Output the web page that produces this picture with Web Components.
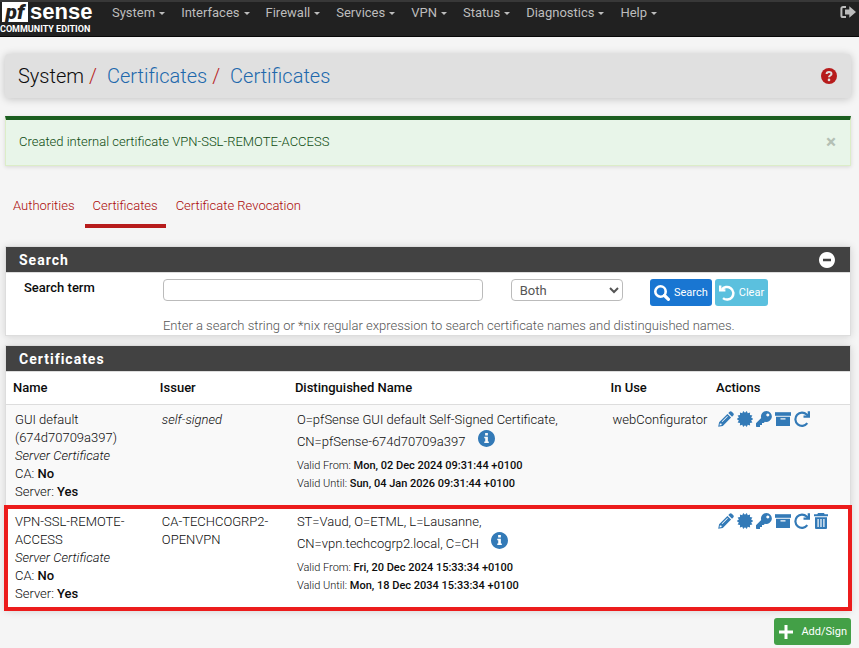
<!DOCTYPE html>
<html lang="en">
<head>
<meta charset="utf-8">
<title>pfSense - System: Certificates</title>
<style>
body { margin: 0; background: #f5f5f5; color: #0c0c0c; font: 300 13px/18px Roboto, "Liberation Sans", sans-serif; }
</style>
</head>
<body>
<pf-app></pf-app>
<script>
const define = (name, html) => customElements.define(name, class extends HTMLElement {
  connectedCallback() {
    if (this.shadowRoot) return;
    const t = document.createElement('template');
    t.innerHTML = typeof html === 'function' ? html(this) : html;
    this.attachShadow({ mode: 'open' }).append(t.content.cloneNode(true));
  }
});

const seal = () => {
  let p = [];
  for (let i = 0; i < 28; i++) {
    const r = i % 2 ? 6.3 : 8.2, a = i * Math.PI / 14;
    p.push((8 + r * Math.cos(a)).toFixed(2) + ' ' + (8 + r * Math.sin(a)).toFixed(2));
  }
  return `<path d="M${p.join('L')}Z"/>`;
};
const icons = {
  pencil: '<path fill-rule="evenodd" d="M11.600.700a1.600 1.600 0 0 1 2.200 0l1.500 1.500a1.600 1.600 0 0 1 0 2.200L14 5.700 10.300 2ZM9.400 2.900l3.700 3.700-8.300 8.300L.2 15.800l.9-4.600ZM9.300 4.900 3.700 10.500l.6.6 5.600-5.600ZM1.900 12.500l-.4 2 2-.4.2-1.400-1.300-.1Z"/>',
  seal: seal(),
  key: '<path fill-rule="evenodd" d="M10.500 0a5.500 5.500 0 1 1-1.600 10.800L7.700 12H6v2H4v2H.7a.7.7 0 0 1-.7-.7v-3l5.200-5.200A5.500 5.500 0 0 1 10.500 0ZM11.800 2.600a1.500 1.500 0 1 0 .01 0Z"/>',
  archive: '<path d="M0 1.200h16v3.600H0Z"/><path fill-rule="evenodd" d="M1 5.700h14v9.300H1ZM5.500 7.200v1.300h5V7.200Z"/>',
  renew: '<path d="M13.300 12.200A6.600 6.600 0 1 1 12.700 3.600L14 5" fill="none" stroke="currentColor" stroke-width="2.200"/><path d="M16 .2V6.700H9.500V4.500h4.200V.2Z"/>',
  trash: '<path d="M5 0h6l.7 1.300H15v2H1v-2h3.300Z"/><path fill-rule="evenodd" d="M2 4.300h12V15a1 1 0 0 1-1 1H3a1 1 0 0 1-1-1ZM4.500 6v8h1.200V6Zm2.900 0v8h1.200V6Zm2.900 0v8h1.200V6Z"/>',
  search: '<path d="M10.500 10.500 14.400 14.400" stroke="currentColor" stroke-width="3.200" stroke-linecap="round"/><circle cx="6.500" cy="6.500" r="5.200" fill="none" stroke="currentColor" stroke-width="2.600"/>',
  undo: '<path d="M2.800 4.800A6.300 6.300 0 1 1 4 13.100" fill="none" stroke="currentColor" stroke-width="2.500"/><path d="M0 .5h2.400v3.700h4v2.400H0Z"/>',
  plus: '<path d="M6.500 1h3v5.500H15v3H9.500V15h-3V9.500H1v-3h5.500Z"/>',
  minus: '<path fill-rule="evenodd" d="M8 0a8 8 0 1 1-.01 0ZM4 6.800v2.400h8V6.800Z"/>',
  info: '<path fill-rule="evenodd" d="M8 0a8 8 0 1 1-.01 0ZM6.700 2.900v2.200h2.600V2.900ZM5.900 6.400v1.300h.9v3.200h-.9v1.300h4.300v-1.300h-.9V6.400Z"/>',
  help: '<circle cx="8" cy="8" r="8"/><path d="M5.600 6.100C5.600 3.200 10.500 3.300 10.500 5.900 10.500 7.500 8 7.500 8 9.200" fill="none" stroke="#e0e0e0" stroke-width="2"/><circle cx="8" cy="11.900" r="1.300" fill="#e0e0e0"/>',
  logout: '<path d="M6 2.900H3A1.600 1.600 0 0 0 1.400 4.500v7A1.600 1.600 0 0 0 3 13.100h3" fill="none" stroke="currentColor" stroke-width="2"/><path d="M5 5.500h4.300V2.200L16 8l-6.700 5.800V10.500H5Z"/>'
};
define('pf-icon', el => `<style>:host{display:inline-block;width:16px;height:16px}svg{display:block;width:100%;height:100%;fill:currentColor}</style>
<svg viewBox="0 0 16 16" aria-hidden="true">${icons[el.getAttribute('name')]}</svg>`);

define('pf-logo', `<style>
:host{display:block;width:96px;color:#fff}
a{color:inherit;text-decoration:none;display:block}
.mark{display:flex;align-items:flex-start;gap:2px;height:21px}
.pf{width:26px;margin-left:2px;background:#fff;color:#212121;font:italic 900 21px/20px Roboto,sans-serif;text-align:center}
.word{font:700 22px/20px "Liberation Sans",sans-serif}
.ed{display:block;font-size:9px;font-weight:700;line-height:12px;white-space:nowrap;text-transform:uppercase}
</style><a href="#"><span class="mark"><span class="pf">pf</span><span class="word">sense</span></span><span class="ed">Community Edition</span></a>`);

define('nav-menu', `<style>
:host{display:block}
a{display:flex;align-items:center;gap:4px;padding:0 8px;color:#bdbdbd;text-decoration:none;font-weight:400}
a::after{content:"";border:3px solid transparent;border-top-color:currentColor;border-bottom:0}
</style><a href="#"><slot></slot></a>`);

define('pf-nav', `<style>
:host{display:flex;align-items:flex-start;background:#212121;border-top:2px solid #383838;border-bottom:1px solid #080808;min-height:34px}
nav{display:flex;flex:1;padding:2px 0 0 8px}
.out{color:#bdbdbd;padding:2px 3px 0 0}
</style><pf-logo></pf-logo>
<nav aria-label="Main">${['System','Interfaces','Firewall','Services','VPN','Status','Diagnostics','Help'].map(t=>`<nav-menu>${t}</nav-menu>`).join('')}</nav>
<a class="out" href="#" aria-label="Logout"><pf-icon name="logout"></pf-icon></a>`);

define('page-heading', `<style>
:host{display:flex;align-items:center;justify-content:space-between;background:#e0e0e0;border-radius:4px;padding:8px 14px 8px 13px;box-shadow:0 1px 8px rgba(0,0,0,.22)}
h1{margin:0;font-size:20px;line-height:28px;font-weight:inherit;display:flex}
h1 a{color:#2068ac;text-decoration:none}
i{font-style:normal;color:#b71c1c;padding:0 10px 0 5px}
.help{color:#b71c1c;line-height:0}
</style><h1><span>System</span><i>/</i><a href="#">Certificates</a><i>/</i><a href="#">Certificates</a></h1>
<a class="help" href="#" aria-label="Help"><pf-icon name="help"></pf-icon></a>`);

define('pf-alert', `<style>
:host{display:flex;align-items:flex-start;justify-content:space-between;background:#e8f5e9;color:#0c4a10;border:1px solid #dcedc8;border-top:4px solid #1b5e20;padding:13px;min-height:19px;box-shadow:0 1px 4px rgba(0,0,0,.12)}
button{border:0;padding:0 1px;background:none;color:#b4c0b5;font:700 19px/18px Roboto,sans-serif}
</style><span><slot></slot></span><button type="button" aria-label="Close">×</button>`);

define('pf-tabs', `<style>
:host{display:flex;gap:2px}
a{color:#ab0808;text-decoration:none;padding:9px 8px;border-bottom:4px solid transparent}
a.on{border-color:#b71c1c}
</style><a href="#">Authorities</a><a class="on" href="#" aria-current="page">Certificates</a><a href="#">Certificate Revocation</a>`);

define('pf-panel', `<style>
:host{display:block;background:#fff;border:1px solid #ddd;box-shadow:0 1px 8px rgba(0,0,0,.14)}
header{display:flex;align-items:center;justify-content:space-between;background:#424242;color:#fff;padding:0 15px 0 13px;height:25px;border-bottom:1px solid #ddd}
h2{margin:0;font-size:14px;font-weight:700;letter-spacing:1px}
</style><header><h2><slot name="title"></slot></h2><slot name="tool"></slot></header><slot></slot>`);

define('pf-button', el => `<style>
:host{display:inline-block}
button{display:flex;align-items:center;gap:4px;height:27px;padding:0 4px;border:0;border-radius:3px;color:#fff;background:${el.getAttribute('color')};font:11px/18px Roboto,sans-serif}
:host([wide]) button{gap:7px}
</style><button type="button"><pf-icon name="${el.getAttribute('icon')}"></pf-icon><span><slot></slot></span></button>`);

define('search-form', `<style>
:host{display:block}
form{display:grid;grid-template-columns:18.6% 41.2% 16.5% 1fr;padding-top:6px;align-items:start}
label{font-weight:500;padding-left:18px}
input,select{box-sizing:border-box;height:22px;border:1px solid #bbb;border-radius:4px;background:#fff;color:#555;font:13px Roboto,sans-serif;display:block}
input{width:92%}
select{width:81%;padding:0 0 0 4px}
.btns{display:flex;gap:3px}
p{margin:11px 0 0;grid-column:2/-1;color:#555}
</style><form><label for="q">Search term</label><input id="q" type="text"><select aria-label="Search in"><option>Both</option></select>
<div class="btns"><pf-button icon="search" color="#1976d2">Search</pf-button><pf-button icon="undo" color="#5bc0de">Clear</pf-button></div>
<p>Enter a search string or *nix regular expression to search certificate names and distinguished names.</p></form>`);

const certs = [
  { name: 'GUI default (674d70709a397)', issuer: '<i>self-signed</i>', dn: 'O=pfSense GUI default Self-Signed Certificate, CN=pfSense-674d70709a397', from: 'Mon, 02 Dec 2024 09:31:44 +0100', until: 'Sun, 04 Jan 2026 09:31:44 +0100', use: 'webConfigurator', acts: ['pencil','seal','key','archive','renew'] },
  { name: 'VPN-SSL-REMOTE-ACCESS', issuer: 'CA-TECHCOGRP2-OPENVPN', dn: 'ST=Vaud, O=ETML, L=Lausanne, CN=vpn.techcogrp2.local, C=CH', from: 'Fri, 20 Dec 2024 15:33:34 +0100', until: 'Mon, 18 Dec 2034 15:33:34 +0100', use: '', acts: ['pencil','seal','key','archive','renew','trash'], marked: true }
];
define('cert-table', `<style>
:host{display:block}
table{width:100%;table-layout:fixed;border-collapse:separate;border-spacing:0}
th{text-align:left;font-weight:500;padding:7px;border-bottom:1px solid #ddd}
td{vertical-align:top;padding:6px 2px 6px 9px}
b{font-weight:500}
tbody tr:first-child td{background:#f9f9f9}
tr.marked{outline:4px solid #ec1c1c;outline-offset:-2px}
.dates{font-size:11px;margin-top:6px}
.info{display:inline-block;width:17px;height:17px;margin:1px 0 0 9px;color:#337ab7;vertical-align:-1px}
.info pf-icon{width:17px;height:17px;display:block}
.acts{display:flex;gap:3px}
.acts a{color:#337ab7;display:block;line-height:0}
</style><table><colgroup><col style="width:17.4%"><col style="width:16%"><col style="width:37.4%"><col style="width:12.5%"><col></colgroup>
<thead><tr><th>Name</th><th>Issuer</th><th>Distinguished Name</th><th>In Use</th><th>Actions</th></tr></thead>
<tbody>${certs.map(c => `<tr${c.marked ? ' class="marked"' : ''}><td>${c.name}<br><i>Server Certificate</i><br>CA: <b>No</b><br>Server: <b>Yes</b></td><td>${c.issuer}</td>
<td>${c.dn} <a class="info" href="#" aria-label="Details"><pf-icon name="info"></pf-icon></a><div class="dates">Valid From: <b>${c.from}</b><br>Valid Until: <b>${c.until}</b></div></td>
<td>${c.use}</td><td><div class="acts">${c.acts.map(a => `<a href="#" aria-label="${a}"><pf-icon name="${a}"></pf-icon></a>`).join('')}</div></td></tr>`).join('')}</tbody></table>`);

define('pf-app', `<style>
:host{display:block}
main{padding:17px 8px 0 5px}
pf-alert{margin-top:18px}
pf-tabs{margin:22px 0 18px}
pf-panel+pf-panel{margin-top:9px}
.tool{border:0;padding:0;background:none;color:#fff;display:block}
.tool pf-icon{display:block}
.foot{display:flex;justify-content:flex-end;margin-top:8px}
</style><pf-nav></pf-nav><main><page-heading></page-heading>
<pf-alert>Created internal certificate VPN-SSL-REMOTE-ACCESS</pf-alert>
<pf-tabs></pf-tabs>
<pf-panel><span slot="title">Search</span><button slot="tool" class="tool" type="button" aria-label="Collapse"><pf-icon name="minus"></pf-icon></button><search-form></search-form></pf-panel>
<pf-panel><span slot="title">Certificates</span><cert-table></cert-table></pf-panel>
<div class="foot"><pf-button wide icon="plus" color="#43a047">Add/Sign</pf-button></div></main>`);
</script>
</body>
</html>
